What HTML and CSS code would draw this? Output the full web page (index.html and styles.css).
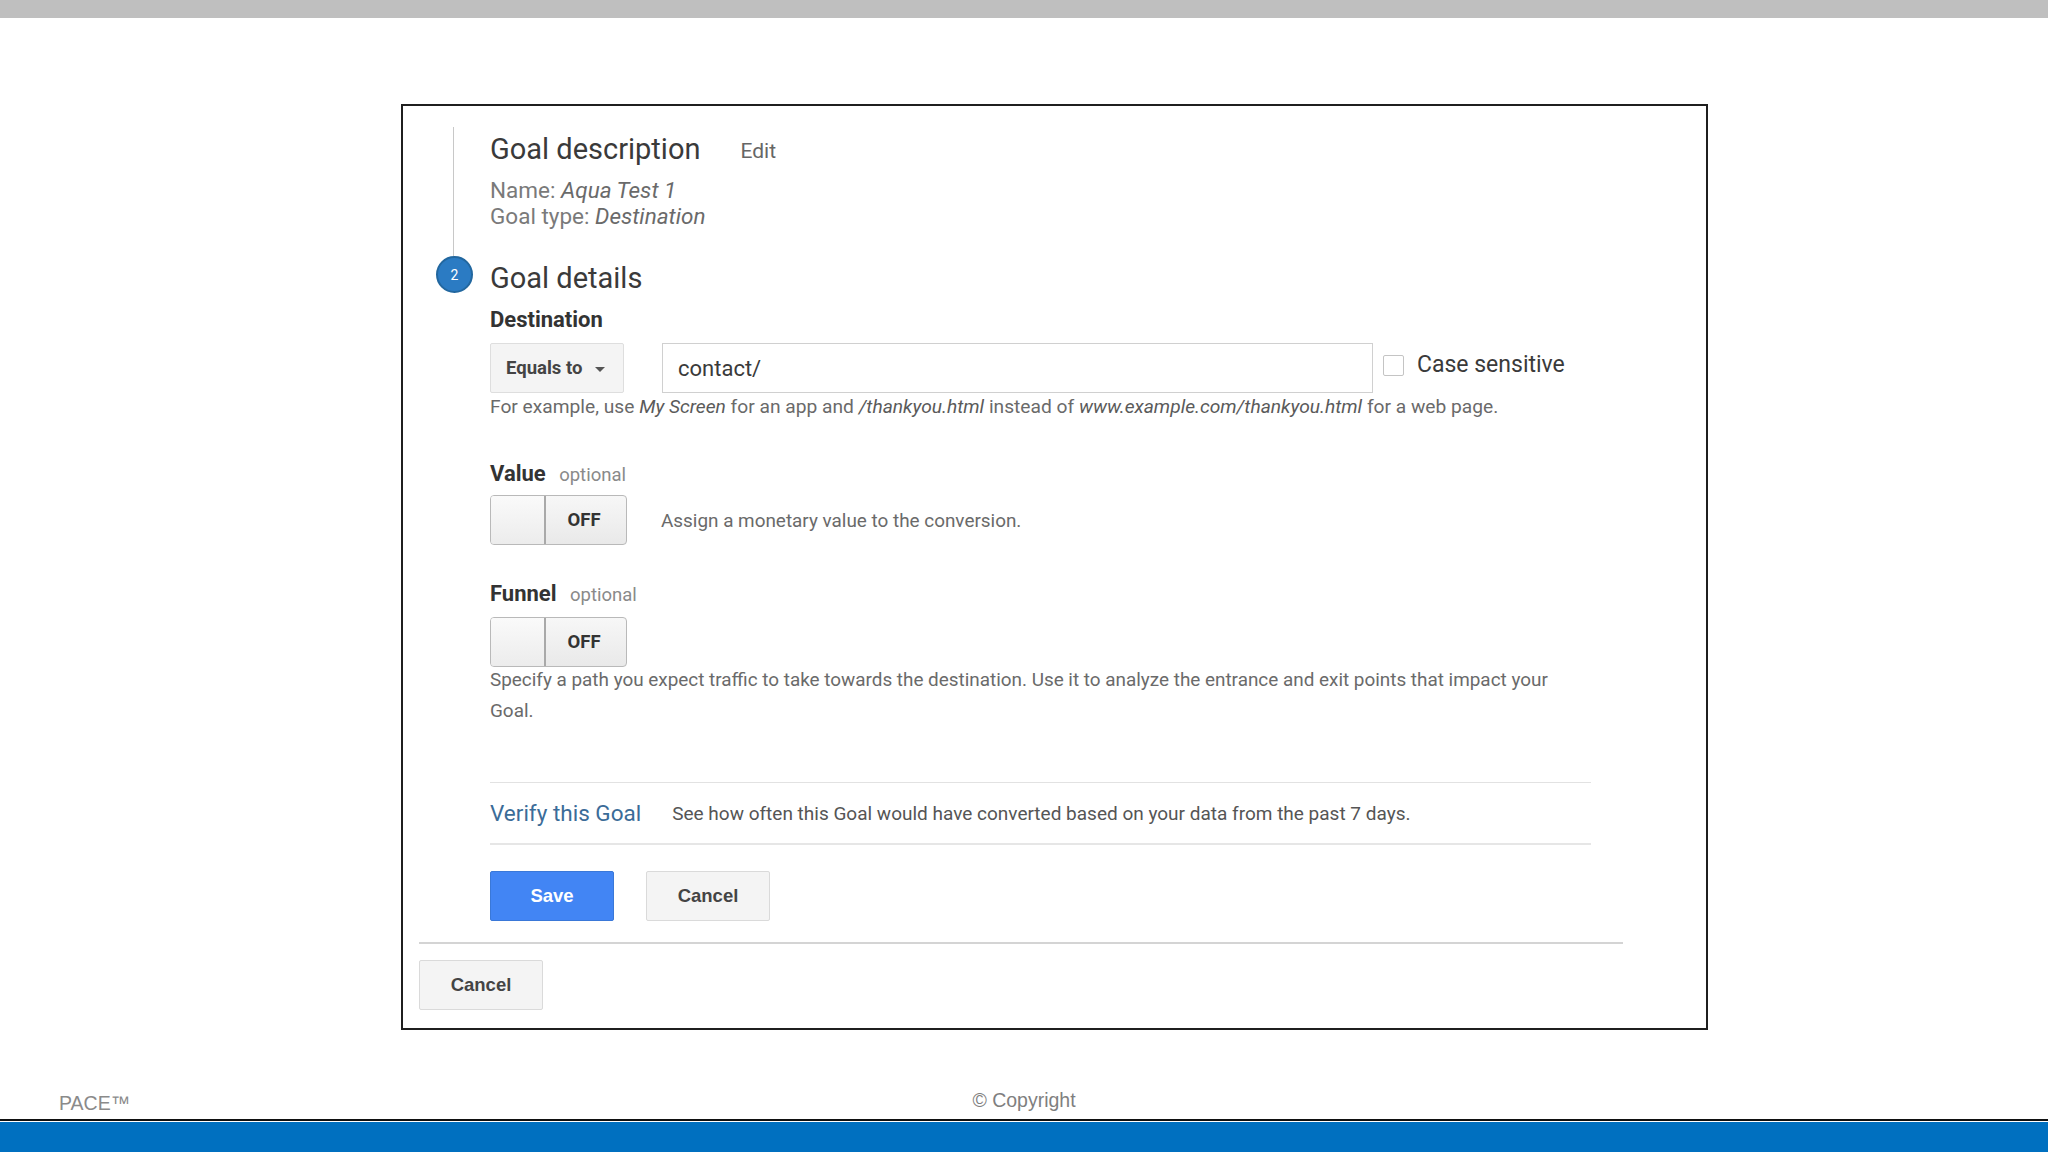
FILE: index.html
```html
<!DOCTYPE html>
<html lang="en">
<head>
<meta charset="utf-8">
<title>Goal details</title>
<link rel="stylesheet" href="styles.css">
</head>
<body>
<div class="topbar"></div>
<main class="stage">
  <section class="card">
    <div class="step step-done">
      <div class="rail"><span class="rail-line"></span></div>
      <div class="step-body">
        <div class="step-head">
          <h2 class="step-title">Goal description</h2>
          <span class="edit">Edit</span>
        </div>
        <p class="meta">Name: <em>Aqua Test 1</em></p>
        <p class="meta">Goal type: <em>Destination</em></p>
      </div>
    </div>

    <div class="step step-current">
      <div class="rail"><span class="badge">2</span></div>
      <div class="step-body">
        <h2 class="step-title">Goal details</h2>

        <div class="field-label">Destination</div>
        <div class="dest-row">
          <div class="select">Equals to
            <svg class="caret" width="12" height="7" viewBox="0 0 12 7"><path d="M1 1h10L6 6z" fill="#555"/></svg>
          </div>
          <div class="input">contact/</div>
          <span class="checkbox"></span>
          <span class="check-label">Case sensitive</span>
        </div>
        <p class="help">For example, use <em>My Screen</em> for an app and <em>/thankyou.html</em> instead of <em>www.example.com/thankyou.html</em> for a web page.</p>

        <div class="field-label gap-value">Value <span class="optional">optional</span></div>
        <div class="toggle-row">
          <div class="toggle"><span class="knob"></span><span class="toggle-text">OFF</span></div>
          <span class="toggle-desc">Assign a monetary value to the conversion.</span>
        </div>

        <div class="field-label gap-funnel">Funnel <span class="optional">optional</span></div>
        <div class="toggle-row tight">
          <div class="toggle"><span class="knob"></span><span class="toggle-text">OFF</span></div>
        </div>
        <p class="funnel-help">Specify a path you expect traffic to take towards the destination. Use it to analyze the entrance and exit points that impact your Goal.</p>

        <div class="verify">
          <span class="verify-link">Verify this Goal</span>
          <span class="verify-text">See how often this Goal would have converted based on your data from the past 7 days.</span>
        </div>

        <div class="actions">
          <button class="btn btn-primary">Save</button>
          <button class="btn">Cancel</button>
        </div>
      </div>
    </div>

    <div class="bottom">
      <button class="btn">Cancel</button>
    </div>
  </section>
</main>
<footer class="footer">
  <span class="pace">PACE™</span>
  <span class="copy">© Copyright</span>
  <span></span>
</footer>
<div class="footer-rule"></div>
<div class="footer-bar"></div>
</body>
</html>
```

FILE: styles.css
```css
* { box-sizing: border-box; }
html, body { margin: 0; padding: 0; }
body {
  width: 2048px;
  height: 1152px;
  overflow: hidden;
  background: #fff;
  font-family: Roboto, "Liberation Sans", Arial, sans-serif;
  display: flex;
  flex-direction: column;
}
.topbar { height: 18px; background: #bfbfbf; flex: none; }
.stage {
  height: 1068px;
  flex: none;
  padding: 86px 0 0 401px;
}
.card {
  width: 1307px;
  height: 926px;
  border: 2px solid #1f1f1f;
  padding: 21px 16px 0 16px;
  display: flex;
  flex-direction: column;
}
.step { display: flex; }
.rail {
  width: 71px;
  flex: none;
  display: flex;
}
.rail-line {
  display: block;
  width: 1px;
  margin-left: 34px;
  background: #c8c8c8;
}
.step-done .step-body { padding-bottom: 29px; }
.badge {
  width: 37px;
  height: 37px;
  margin-left: 17px;
  margin-top: -2px;
  border-radius: 50%;
  background: #2b7bc3;
  border: 2px solid #22679f;
  color: #fff;
  font-size: 14px;
  display: flex;
  align-items: center;
  justify-content: center;
}
.step-body { flex: 1; }
.step-head { display: flex; align-items: center; }
.step-title {
  margin: 0;
  font-size: 29px;
  font-weight: 400;
  line-height: 40px;
  color: #3a3a3a;
}
.edit {
  margin-left: 40px;
  font-size: 21px;
  color: #666;
  line-height: 40px;
  padding-top: 4px;
}
.meta {
  margin: 0;
  font-size: 22.5px;
  line-height: 26px;
  color: #7a7a7a;
}
.step-head + .meta { margin-top: 6px; }
.meta em { color: #6a6a6a; }
.field-label {
  margin-top: 8px;
  font-size: 22px;
  font-weight: 700;
  line-height: 28px;
  color: #333;
}
.gap-value { margin-top: 41px; }
.gap-funnel { margin-top: 35px; }
.optional {
  font-weight: 400;
  font-size: 18.5px;
  color: #8a8a8a;
  margin-left: 8px;
}
.dest-row {
  margin-top: 9px;
  display: flex;
  align-items: center;
  height: 50px;
}
.select {
  width: 134px;
  height: 50px;
  background: #f4f4f4;
  border: 1px solid #dedede;
  border-radius: 2px;
  display: flex;
  align-items: center;
  padding-left: 15px;
  font-size: 18.5px;
  font-weight: 700;
  color: #444;
}
.caret { margin-left: 12px; margin-top: 2px; }
.input {
  width: 711px;
  height: 50px;
  margin-left: 38px;
  border: 1px solid #d0d0d0;
  display: flex;
  align-items: center;
  padding-left: 15px;
  font-size: 22px;
  color: #3a3a3a;
}
.checkbox {
  width: 21px;
  height: 21px;
  margin-left: 10px;
  margin-top: -6px;
  border: 1px solid #c4c4c4;
  border-radius: 2px;
  background: #fff;
}
.check-label {
  margin-left: 13px;
  margin-top: -7px;
  font-size: 23px;
  color: #3a3a3a;
}
.help {
  margin: 2px 0 0 0;
  font-size: 19.2px;
  line-height: 24px;
  color: #6a6a6a;
}
.help em { color: #5a5a5a; }
.toggle-row {
  margin-top: 6px;
  display: flex;
  align-items: center;
}
.toggle-row.tight { margin-top: 8px; }
.toggle {
  width: 137px;
  height: 50px;
  border: 1px solid #b9b9b9;
  border-radius: 4px;
  background: linear-gradient(#f7f7f7, #e9e9e9);
  display: flex;
  overflow: hidden;
}
.knob {
  width: 55px;
  border-right: 2px solid #a9a9a9;
  background: linear-gradient(#fafafa, #ececec);
}
.toggle-text {
  flex: 1;
  display: flex;
  align-items: center;
  justify-content: center;
  font-size: 18.5px;
  font-weight: 700;
  color: #333;
  padding-right: 4px;
}
.toggle-desc {
  margin-left: 34px;
  font-size: 18.9px;
  color: #6a6a6a;
}
.funnel-help {
  margin: -3px 0 0 0;
  max-width: 1080px;
  font-size: 18.9px;
  line-height: 31px;
  color: #6a6a6a;
}
.verify {
  margin-top: 56px;
  width: 1101px;
  height: 63px;
  border-top: 1px solid #e2e2e2;
  border-bottom: 2px solid #e6e6e6;
  display: flex;
  align-items: center;
}
.verify-link {
  font-size: 22.5px;
  color: #3b6c98;
}
.verify-text {
  margin-left: 31px;
  font-size: 19px;
  color: #555;
}
.actions {
  margin-top: 26px;
  display: flex;
  gap: 32px;
}
.btn {
  width: 124px;
  height: 50px;
  border: 1px solid #dadada;
  border-radius: 2px;
  background: #f4f4f4;
  font-family: "Liberation Sans", Arial, sans-serif;
  font-size: 18.5px;
  font-weight: 700;
  color: #444;
  padding: 0;
}
.btn-primary {
  background: #4285f4;
  border-color: #3a78d8;
  color: #fff;
}
.bottom {
  margin-top: 21px;
  width: 1204px;
  border-top: 2px solid #d4d4d4;
  padding-top: 16px;
}
.footer {
  height: 33px;
  flex: none;
  display: grid;
  grid-template-columns: 1fr auto 1fr;
  align-items: center;
  font-family: "Liberation Sans", Arial, sans-serif;
  font-size: 19.5px;
  color: #8a8a8a;
}
.pace { padding-left: 59px; padding-top: 1px; }
.copy { color: #7f7f7f; margin-top: -5px; }
.footer-rule { height: 2px; background: #111; flex: none; }
.footer-bar { height: 30px; margin-top: 1px; background: #0070c0; flex: none; }
```
